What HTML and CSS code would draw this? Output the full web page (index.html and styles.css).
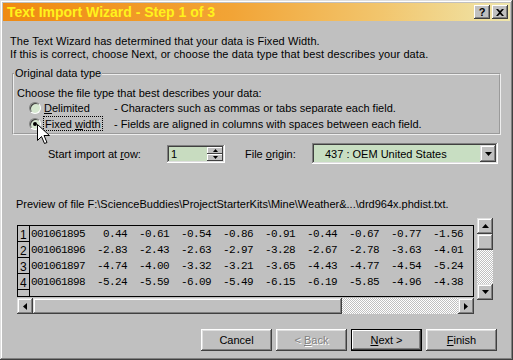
FILE: index.html
```html
<!DOCTYPE html>
<html lang="en">
<head>
    <meta charset="UTF-8">
    <title>Text Import Wizard - Step 1 of 3</title>
    <link rel="stylesheet" href="styles.css">
</head>
<body>
    <div class="window">
        <div class="titlebar">
            <span class="title">Text Import Wizard - Step 1 of 3</span>
            <div class="title-buttons">
                <button class="tbtn">?</button>
                <button class="tbtn">
                    <svg width="8" height="7" viewBox="0 0 8 7"><path d="M0 0h2l2 2 2-2h2L5 3.5 8 7H6L4 5 2 7H0l3-3.5z" fill="#000"/></svg>
                </button>
            </div>
        </div>

        <div class="content">
            <p class="intro">The Text Wizard has determined that your data is Fixed Width.<br>If this is correct, choose Next, or choose the data type that best describes your data.</p>

            <fieldset class="group">
                <legend>Original data type</legend>
                <div class="prompt">Choose the file type that best describes your data:</div>
                <div class="option">
                    <span class="radio"></span>
                    <span class="opt-label"><u>D</u>elimited</span>
                    <span class="opt-desc">- Characters such as commas or tabs separate each field.</span>
                </div>
                <div class="option">
                    <span class="radio checked"></span>
                    <span class="opt-label"><span class="focus">Fixed <u>w</u>idth</span></span>
                    <span class="opt-desc">- Fields are aligned in columns with spaces between each field.</span>
                </div>
            </fieldset>

            <div class="import-row">
                <span class="row-label">Start import at <u>r</u>ow:</span>
                <div class="spin">
                    <span class="spin-value">1</span>
                    <div class="spin-buttons">
                        <span class="sbtn"><svg width="5" height="3" viewBox="0 0 5 3"><path d="M2.5 0L5 3H0z"/></svg></span>
                        <span class="sbtn"><svg width="5" height="3" viewBox="0 0 5 3"><path d="M0 0h5L2.5 3z"/></svg></span>
                    </div>
                </div>
                <span class="origin-label">File <u>o</u>rigin:</span>
                <div class="combo">
                    <span class="combo-value">437 : OEM United States</span>
                    <span class="combo-btn"><svg width="7" height="4" viewBox="0 0 7 4"><path d="M0 0h7L3.5 4z"/></svg></span>
                </div>
            </div>

            <div class="preview-label">Preview of file F:\ScienceBuddies\ProjectStarterKits\Mine\Weather&amp;...\drd964x.phdist.txt.</div>

            <div class="preview-wrap">
                <div class="preview-col">
                    <div class="preview">
                        <div class="prow"><span class="rnum">1</span><span class="rdata">001061895   0.44  -0.61  -0.54  -0.86  -0.91  -0.44  -0.67  -0.77  -1.56</span></div>
                        <div class="prow"><span class="rnum">2</span><span class="rdata">001061896  -2.83  -2.43  -2.63  -2.97  -3.28  -2.67  -2.78  -3.63  -4.01</span></div>
                        <div class="prow"><span class="rnum">3</span><span class="rdata">001061897  -4.74  -4.00  -3.32  -3.21  -3.65  -4.43  -4.77  -4.54  -5.24</span></div>
                        <div class="prow"><span class="rnum">4</span><span class="rdata">001061898  -5.24  -5.59  -6.09  -5.49  -6.15  -6.19  -5.85  -4.96  -4.38</span></div>
                        <div class="prow last"><span class="rnum"></span><span class="rdata"></span></div>
                    </div>
                    <div class="hscroll">
                        <span class="sb-btn"><svg width="4" height="7" viewBox="0 0 4 7"><path d="M4 0v7L0 3.5z"/></svg></span>
                        <span class="hthumb"></span>
                        <span class="track"></span>
                        <span class="sb-btn"><svg width="4" height="7" viewBox="0 0 4 7"><path d="M0 0v7l4-3.5z"/></svg></span>
                    </div>
                </div>
                <div class="vscroll">
                    <span class="sb-btn"><svg width="7" height="4" viewBox="0 0 7 4"><path d="M3.5 0L7 4H0z"/></svg></span>
                    <span class="vthumb"></span>
                    <span class="track"></span>
                    <span class="sb-btn"><svg width="7" height="4" viewBox="0 0 7 4"><path d="M0 0h7L3.5 4z"/></svg></span>
                </div>
            </div>

            <div class="buttons">
                <button class="btn">Cancel</button>
                <button class="btn disabled">&lt; <u>B</u>ack</button>
                <button class="btn default"><u>N</u>ext &gt;</button>
                <button class="btn"><u>F</u>inish</button>
            </div>
        </div>

        <svg class="cursor" width="13" height="21" viewBox="0 0 13 21">
            <path d="M0.5 0.5V16.5L4.5 12.5L7.5 19.5L10 18.5L7 11.5H12.5Z" fill="#fff" stroke="#000" stroke-width="1"/>
        </svg>
    </div>
</body>
</html>
```

FILE: styles.css
```css
/* Classic dialog look */
body {
    margin: 0;
    font-family: "Liberation Sans", Arial, sans-serif;
    font-size: 11px;
    color: #000;
}

.window {
    position: relative;
    width: 513px;
    height: 360px;
    box-sizing: border-box;
    padding: 3px;
    background: #c0c0c0;
    box-shadow: inset -1px -1px #404040, inset 1px 1px #dfdfdf, inset -2px -2px #808080, inset 2px 2px #fff;
}

.titlebar {
    height: 18px;
    display: flex;
    align-items: center;
    justify-content: space-between;
    padding: 0 2px 0 4px;
    background: linear-gradient(to right, #ef8a12, #f2a436 45%, #f2c66e 75%, #efe6ac);
}

.title {
    color: #fff21c;
    font-weight: bold;
    font-size: 14px;
}

.title-buttons {
    display: flex;
    gap: 2px;
}

.tbtn {
    width: 16px;
    height: 14px;
    padding: 0;
    border: none;
    background: #c0c0c0;
    box-shadow: inset -1px -1px #404040, inset 1px 1px #fff, inset -2px -2px #808080;
    font-family: "Liberation Sans", Arial, sans-serif;
    font-weight: bold;
    font-size: 11px;
    line-height: 14px;
    display: flex;
    align-items: center;
    justify-content: center;
}

.content {
    padding: 0 9px 0 7px;
}

.intro {
    margin: 14px 0 6px;
    line-height: 13px;
    letter-spacing: 0.1px;
}

/* Original data type group */
.group {
    margin: 0 0 0 2px;
    padding: 7px 3px 3px;
    border: 2px groove #eeeeee;
    height: 54px;
}

.group legend {
    padding: 0 1px;
    margin-left: -3px;
    line-height: 13px;
}

.prompt {
    line-height: 13px;
}

.option {
    display: flex;
    align-items: center;
    height: 16px;
}

.radio {
    width: 12px;
    height: 12px;
    margin-left: 12px;
    margin-right: 3px;
    box-sizing: border-box;
    border-radius: 50%;
    background: #d6e8d0;
    border: 1px solid;
    border-color: #808080 #fff #fff #808080;
    box-shadow: inset 1px 1px #404040;
    position: relative;
}

.radio.checked::after {
    content: "";
    position: absolute;
    left: 3px;
    top: 3px;
    width: 4px;
    height: 4px;
    border-radius: 50%;
    background: #000;
}

.opt-label {
    width: 70px;
}

.focus {
    outline: 1px dotted #000;
    padding: 1px 1px 0;
}

/* Start row / file origin */
.import-row {
    display: flex;
    align-items: center;
    height: 21px;
    margin-top: 8px;
    padding-left: 38px;
}

.row-label {
    width: 119px;
}

.spin {
    display: flex;
    width: 58px;
    height: 18px;
    box-sizing: border-box;
    padding: 2px;
    background: #c8dcc0;
    box-shadow: inset -1px -1px #fff, inset 1px 1px #808080, inset -2px -2px #dfdfdf, inset 2px 2px #404040;
}

.spin-value {
    flex: 1;
    padding-left: 2px;
    line-height: 14px;
}

.spin-buttons {
    display: flex;
    flex-direction: column;
    width: 16px;
}

.sbtn {
    flex: 1;
    display: flex;
    align-items: center;
    justify-content: center;
    background: #c0c0c0;
    box-shadow: inset -1px -1px #404040, inset 1px 1px #fff;
}

.origin-label {
    margin-left: 20px;
    width: 67px;
}

.combo {
    display: flex;
    align-items: center;
    width: 186px;
    height: 21px;
    box-sizing: border-box;
    padding: 2px;
    background: #c8dec2;
    box-shadow: inset -1px -1px #fff, inset 1px 1px #808080, inset -2px -2px #dfdfdf, inset 2px 2px #404040;
}

.combo-value {
    flex: 1;
    padding-left: 11px;
}

.combo-btn {
    width: 16px;
    height: 17px;
    display: flex;
    align-items: center;
    justify-content: center;
    background: #c0c0c0;
    box-shadow: inset -1px -1px #404040, inset 1px 1px #dfdfdf, inset -2px -2px #808080, inset 2px 2px #fff;
}

/* Preview */
.preview-label {
    margin: 34px 0 0 6px;
    line-height: 13px;
}

.preview-wrap {
    display: flex;
    align-items: flex-start;
    margin-top: 7px;
    padding-left: 7px;
}

.preview-col {
    margin-top: 7px;
    width: 457px;
}

.preview {
    height: 72px;
    box-sizing: border-box;
    border: 1px solid #000;
    overflow: hidden;
}

.prow {
    display: flex;
    height: 16px;
}

.rnum {
    width: 12px;
    flex: none;
    box-sizing: border-box;
    border-right: 1px solid #000;
    border-bottom: 1px solid #000;
    padding-left: 2px;
    font-size: 12px;
    line-height: 19px;
}

.prow.last .rnum {
    border-bottom: none;
}

.rdata {
    white-space: pre;
    font-family: "Liberation Mono", "Courier New", monospace;
    font-size: 11px;
    letter-spacing: -0.6px;
    line-height: 16px;
    padding-left: 1px;
}

.hscroll {
    display: flex;
    height: 16px;
    margin-top: 1px;
}

.sb-btn {
    width: 16px;
    height: 16px;
    flex: none;
    display: flex;
    align-items: center;
    justify-content: center;
    background: #c0c0c0;
    box-shadow: inset -1px -1px #404040, inset 1px 1px #dfdfdf, inset -2px -2px #808080, inset 2px 2px #fff;
}

.hthumb {
    width: 309px;
    background: #c0c0c0;
    box-shadow: inset -1px -1px #404040, inset 1px 1px #dfdfdf, inset -2px -2px #808080, inset 2px 2px #fff;
}

.track {
    flex: 1;
    background: repeating-conic-gradient(#fff 0 25%, #c0c0c0 0 50%) 0 0 / 2px 2px;
}

.vscroll {
    display: flex;
    flex-direction: column;
    width: 16px;
    height: 82px;
    margin-left: 3px;
}

.vthumb {
    height: 16px;
    background: #c0c0c0;
    box-shadow: inset -1px -1px #404040, inset 1px 1px #dfdfdf, inset -2px -2px #808080, inset 2px 2px #fff;
}

/* Bottom buttons */
.buttons {
    display: flex;
    justify-content: flex-end;
    gap: 4px;
    margin-top: 15px;
    padding-right: 4px;
}

.btn {
    width: 71px;
    height: 22px;
    padding: 0;
    border: none;
    background: #c0c0c0;
    font-family: "Liberation Sans", Arial, sans-serif;
    font-size: 11px;
    color: #000;
    box-shadow: inset -1px -1px #404040, inset 1px 1px #fff, inset -2px -2px #808080, inset 2px 2px #dfdfdf;
}

.btn.disabled {
    color: #808080;
    text-shadow: 1px 1px #fff;
}

.btn.default {
    box-shadow: inset 0 0 0 1px #000, inset -2px -2px #404040, inset 2px 2px #fff, inset -3px -3px #808080;
}

.cursor {
    position: absolute;
    left: 37px;
    top: 124px;
}
```
